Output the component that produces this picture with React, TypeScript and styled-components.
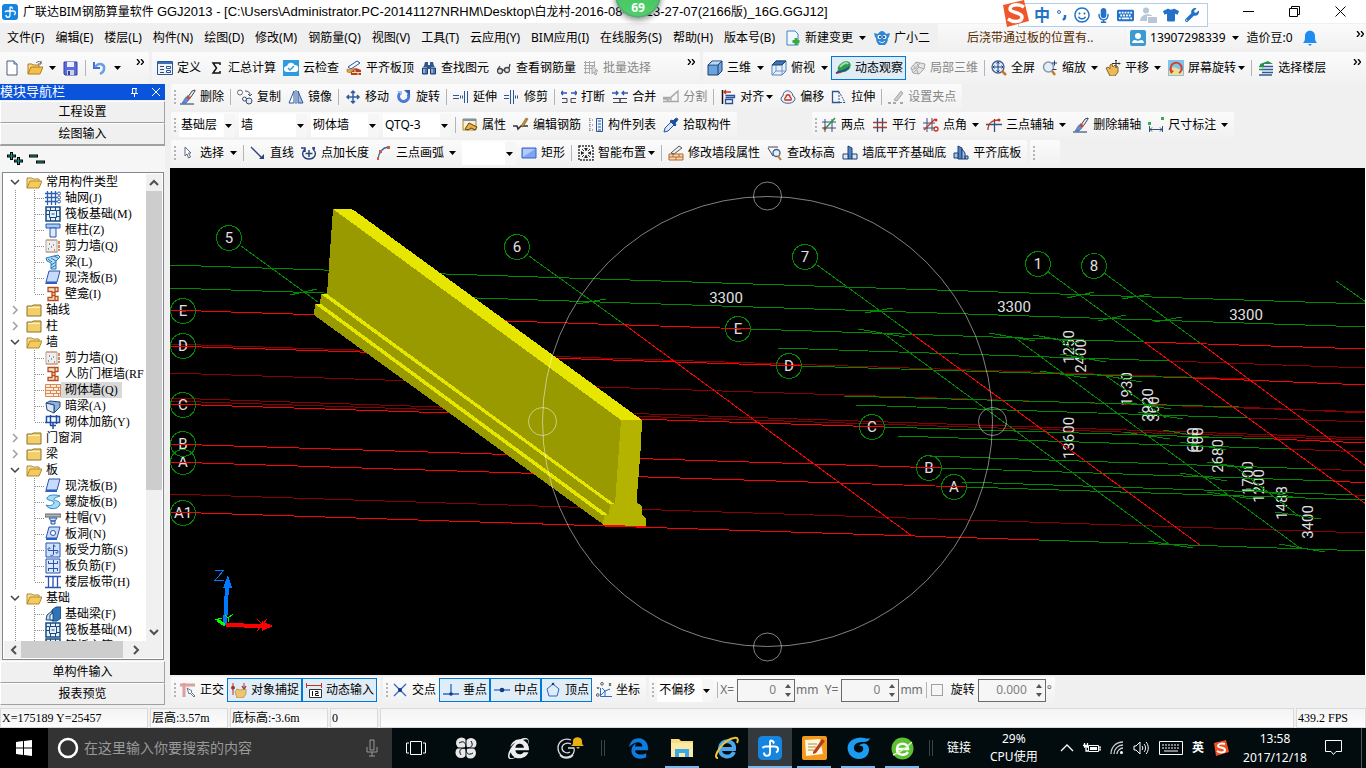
import React from 'react';
import styled, { createGlobalStyle, css } from 'styled-components';
import { FaInternetExplorer, FaKeyboard, FaMicrophone, FaRegSmile, FaTshirt, FaWrench } from 'react-icons/fa';
import { FaEdgeLegacy } from 'react-icons/fa6';

const ui = '"Noto Sans", "Noto Sans CJK SC", sans-serif';
const song = '"Liberation Serif", "Noto Sans CJK SC", serif';

const GlobalStyle = createGlobalStyle`
  * { box-sizing: border-box; }
  body { margin: 0; background: #f0f0f0; color: #000; font: 12px/16px ${ui}; overflow: hidden; }
  button, input, select { font: inherit; color: inherit; margin: 0; padding: 0; border: 0; background: none; border-radius: 0; }
  svg { display: block; }
`;

/* ---------- icons ---------- */

const B = '#2b5797';
const R = '#c8321e';
const G = '#a8a8a8';

const icons: Record<string, React.ReactNode> = {
  file: <><path d="M3 1h7l3 3v11H3z" fill="#fff" stroke="#4a5f80" /><path d="M10 1v3h3" fill="#cfe0f5" stroke="#4a5f80" /></>,
  open: <><path d="M1 14V4h4l1 1h6v3" fill="#f7d98a" stroke="#b07d1c" /><path d="M1 14L4 7h12l-3 7z" fill="#f5c04a" stroke="#b07d1c" /><path d="M9 3c2-2 4-2 5 0m0-2v3h-3" fill="none" stroke="#555" /></>,
  save: <><path d="M1 2h13v13H2l-1-1z" fill="#5a6be0" stroke="#32409c" /><path d="M4 2h7v5H4z" fill="#eef" /><path d="M4 10h7v5H4z" fill="#cdd3e8" /><path d="M5 11h2v4H5z" fill="#32409c" /></>,
  undo: <><path d="M2 2v6h6" fill="none" stroke="#3c6fd0" strokeWidth="2" /><path d="M3 7c4-5 10-3 9 2 0 3-2 4-4 5" fill="none" stroke="#6c9be8" strokeWidth="2.500" /></>,
  define: <><path d="M.5 1.500h15v13H.5z" fill="#eaf2fc" stroke={B} /><path d="M1 2h14v2H1z" fill="#3a70b8" /><path d="M3 6.500h4M3 9.500h4M3 12.500h4" stroke="#445" /><path d="M9.500 6.500h4v2h-4zm0 4h4v2h-4z" fill="#fff" stroke={B} /></>,
  sigma: <path d="M12 5V3H5l3.500 5L5 13h7v-2" fill="none" stroke="#111" strokeWidth="1.500" />,
  cloud: <><path d="M0 0h16v16H0z" fill="#2e9be0" /><path d="M4 12a3 3 0 0 1 0-6 4 4 0 0 1 7.500-1A3.500 3.500 0 0 1 12 12z" fill="#fff" /><path d="M5 8l2 2 4-4" fill="none" stroke="#2e9be0" strokeWidth="1.500" /></>,
  slabTop: <><path d="M2 7l9-6 3 2-9 6z" fill="#f4f7fc" stroke={B} /><path d="M1 9l4 1 3-2 1 2-4 3-4-1z" fill="#e9a23c" stroke="#8a5a18" strokeWidth=".500" /><path d="M5 15v-3l5-4 5 2v5z" fill="#b5402a" /><path d="M6 12.500h9M9 10v2m3 1v2" stroke="#ffe0a0" /></>,
  find: <><path d="M3 6l1-4h3v5H2zM9 2h3l1 4 1 1H9z" fill="#2f568f" /><path d="M1.500 8h5v6h-5zm8 0h5v6h-5z" fill="#4d7ab8" stroke="#1d3b68" /><path d="M6 5h4v4H6z" fill="#2f568f" /><path d="M3 9v4M11 9v4" stroke="#cfe0f5" /></>,
  glasses: <><circle cx="4" cy="11" r="2.500" fill="#dde6f2" stroke="#444" strokeWidth="1.300" /><circle cx="11" cy="10" r="2.500" fill="#dde6f2" stroke="#444" strokeWidth="1.300" /><path d="M6.500 10h2M13 8l1-4M2 9l2-3" stroke="#444" strokeWidth="1.300" /></>,
  batch: <><path d="M1 2.500h11M1 5.500h11M1 8.500h8M1 12.500h6M2.500 1v13M6.500 1v13M11.500 1v6" stroke={G} fill="none" /><path d="M9 6l6 5h-3l2 3-2 1-1-3-2 2z" fill="#ddd" stroke={G} /></>,
  cube: <><path d="M1 5l4-4h10v10l-4 4H1z" fill="#6ba3dc" stroke="#1f3f6e" /><path d="M1 5h10v10M11 5l4-4" fill="none" stroke="#1f3f6e" /><path d="M2 4.500l3.500-3h8.500l-3.500 3z" fill="#b9d8f5" /></>,
  cubeTop: <><path d="M1 5l4-4h10v10l-4 4H1z" fill="#e7f0fb" stroke="#5580b8" /><path d="M1 5l4-4h10l-4 4z" fill="#3b76bd" stroke="#1f3f6e" /><path d="M11 5v10M5 5v6h9M5 11l-4 4" fill="none" stroke="#6b94c8" /></>,
  orbit: <><path d="M1 14l3-6 3-2 3 4-4 3z" fill="#c33" /><path d="M3 7c3-6 10-7 12-4s-1 8-6 9-7-1-6-5z" fill="#2f9b4a" /><path d="M5 7c3-4 7-5 8-3" stroke="#9be0a8" strokeWidth="2" fill="none" /><path d="M1 13c5-3 10-1 13-6" stroke="#1a4f9c" fill="none" strokeWidth="1.500" /></>,
  local3d: <path d="M1 8l5-6 9 2-1 5-5 5-6-1zM6 2l3 5 5 2M9 7l-6 6M3 5l4 5 1 4M10 3l-2 3-6 4" fill="#e3e3e3" stroke={G} />,
  fit: <><circle cx="7" cy="7" r="6" fill="#e2eefb" stroke="#445f8a" strokeWidth="1.300" /><path d="M7 2v10M2 7h10M5.500 3.500L7 2l1.500 1.500M5.500 10.500L7 12l1.500-1.500M3.500 5.500L2 7l1.500 1.500M10.500 5.500L12 7l-1.500 1.500" stroke="#1c3f86" fill="none" /><path d="M11 11l4 4" stroke="#c07c2c" strokeWidth="2.500" /></>,
  zoom: <><circle cx="6.500" cy="7" r="5" fill="#e2eefb" stroke="#8b98a8" strokeWidth="1.500" /><path d="M10 11l3 4" stroke="#c07c2c" strokeWidth="2.500" /><path d="M10 3h5m-2.500-2.500v5M10.500 9.500h4" stroke="#1c3f86" /></>,
  pan: <><path d="M1 8l2-1 2 2V5l2-1 1 3 2-2 3 2v5l-3 4H5z" fill="#e9b95c" stroke="#8a6420" /><path d="M11 0v8M7 3.500h8M10 1l1-1 1 1M14 2.500l1 1-1 1" stroke="#333" fill="none" /></>,
  rotScreen: <><path d="M0 0h16v16H0z" fill="#7cc6ee" /><path d="M1 10l5-3 9 4v4H1z" fill="#f2df8e" /><path d="M3 10a5.500 5.500 0 1 1 8 3" fill="none" stroke="#e03a2a" strokeWidth="2" /><path d="M1 9l2 5 3-3z" fill="#e03a2a" /></>,
  floors: <><path d="M2 4l8-3 5 3H6v2H2z" fill="#2e8f50" /><path d="M4 6.500h11M4 9.500h11M4 12.500h11M1 15h13" stroke="#2d5c94" strokeWidth="1.300" /><path d="M1 6.500h5M1 9.500h4" stroke="#2e8f50" strokeWidth="1.500" /></>,
  brush: <><path d="M15 1l-3 1-4 6 1 1 2-1 4-6z" fill="#e9eef5" stroke="#445" /><path d="M8 6l3 3-2 2-3-3z" fill="#c84a35" /><path d="M6 8l3 3-3 3H2c1-1 2-4 4-6z" fill="#5c8fd8" stroke="#28509c" strokeWidth=".500" /><path d="M0 15h14" stroke="#1d2f50" /></>,
  copy: <><circle cx="3" cy="3.500" r="2.500" fill="#fff" stroke="#667" /><circle cx="12" cy="12" r="3" fill="#dce8f8" stroke="#3b4c6a" /><circle cx="7.500" cy="10" r="2" fill="#fff" stroke="#3b4c6a" /><path d="M8 2c3 0 5 1 5 4m-2-1l2 2 2-2" fill="none" stroke="#556" /></>,
  mirror: <><path d="M6 2v12H1z" fill="#fff" stroke={B} /><path d="M10 2v12h5z" fill="#9cc0ec" stroke={B} /><path d="M8 1v14" stroke={B} /></>,
  move: <path d="M8 2v12M2 8h12M6 4l2-2 2 2M6 12l2 2 2-2M4 6L2 8l2 2M12 6l2 2-2 2" fill="none" stroke="#345c9c" strokeWidth="1.500" />,
  rotate: <><path d="M4 4a5 5 0 1 0 8 1" fill="none" stroke="#4a7ad8" strokeWidth="3" /><path d="M8 1h6v6z" fill="#3560c0" /><path d="M1 2h5v4z" fill="#9dbcf0" /></>,
  extend: <><path d="M0 6.500h6M0 9.500h6" stroke={B} /><path d="M7 8h4" stroke={B} strokeDasharray="1 1" strokeWidth="3" /><path d="M11.500 2v12M14.500 2v12" stroke={B} /></>,
  trim: <><path d="M0 6.500h5M0 9.500h5" stroke={B} /><path d="M6.500 1v14M9.500 1v14" stroke={B} /><path d="M11 8h4" stroke={B} strokeDasharray="1 1" strokeWidth="3" /></>,
  breakIt: <><path d="M0 4h6M10 4h6M2 2L0 4l2 2M14 2l2 2-2 2" fill="none" stroke="#3059b0" strokeWidth="1.300" /><path d="M1 9.500h5v4H1M15 9.500h-5v4h5" fill="none" stroke="#445" /></>,
  join: <><path d="M0 4h6M10 4h6M4 2l2 2-2 2M12 2l-2 2 2 2" fill="none" stroke="#3059b0" strokeWidth="1.300" /><path d="M1 9.500h7v4H1M15 9.500H8v4h7" fill="none" stroke="#445" /></>,
  split: <path d="M0 8.500h7M0 12.500h16M8 12V8l7-6v10M4 12l10-9M0 10h5" stroke={G} fill="none" strokeWidth="1.300" />,
  align: <><path d="M2.500 1v14" stroke="#111" strokeWidth="1.500" /><path d="M5.500 10.500h7v4h-7zM5.500 6.500h9v2h-9" fill="none" stroke="#28509c" strokeWidth="1.300" /><path d="M4 3h7M6 1L4 3l2 2" fill="none" stroke={R} strokeWidth="1.300" /></>,
  offset: <><path d="M2 12a3 3 0 0 1 1-5c0-7 9-7 10 0a3 3 0 0 1 1 5c-2 3-10 3-12 0z" fill="#eef3fb" stroke="#445f8a" /><path d="M5 11c-1-2 0-2 1-3 0-3 4-3 4 0 1 1 2 1 1 3z" fill="none" stroke={R} strokeWidth="1.300" /></>,
  stretch: <><path d="M8 2.500H1.500v11H9" fill="none" stroke={B} strokeWidth="1.300" /><path d="M8 2.500l6 11M8 3v11M9 13.500h6" stroke={B} strokeDasharray="2 1" fill="none" /></>,
  grip: <><path d="M6 11l7-9 2 2-6 8z" fill="#ccc" stroke={G} /><path d="M0 14h3m2 0h3m4 0h3" stroke={G} strokeWidth="2" /></>,
  props: <><path d="M1 2h13v11H1z" fill="#fdf0c8" stroke="#b08030" /><path d="M1 2h13v2H1z" fill="#6f93c8" /><path d="M3 12l4-6 8 4-2 3-4-2-3 2z" fill="#e8b04a" stroke="#5c4010" /></>,
  editBar: <><path d="M0 9h4l1 3 3-3h7" fill="none" stroke="#333" strokeWidth="1.500" /><path d="M8 9l5-8 2 1-5 8z" fill="#c99035" stroke="#5a3a10" strokeWidth=".500" /></>,
  list: <><path d="M8.500 1.500h6v13h-6z" fill="#e9f1fc" stroke={B} /><path d="M10 4h3M10 7h3M10 10h3M10 13h3" stroke={B} /><path d="M1 3h2M4 3h2M1 8h2M4 8h2M1 13h2M4 13h2M2 1v14" stroke="#667" strokeDasharray="1 1" /></>,
  picker: <><path d="M1 15l1-4 6-6 3 3-6 6z" fill="#d8e8fa" stroke="#28509c" /><path d="M7 4l2-1 1 1 2-2c2-2 4 0 2 2l-2 2 1 2-1 1z" fill="#1f4f9e" stroke="#1f4f9e" /></>,
  twoPt: <><path d="M1 5h14M1 11h14M4 2v13M11 2v13" stroke="#34507c" /><path d="M3 13L14 1" stroke="#2a9a40" strokeWidth="1.500" /><circle cx="4" cy="11" r="1.500" fill={R} /></>,
  parallel: <><path d="M1 5.500h14M1 10.500h14" stroke={R} strokeWidth="1.300" /><path d="M5.500 1v14M10.500 1v14" stroke="#34507c" strokeWidth="1.300" /></>,
  ptAngle: <><path d="M0 6h12M0 11h12M4 1v14M9 1v13" stroke="#34507c" /><path d="M1 13L12 2" stroke={R} strokeWidth="1.300" /><circle cx="13" cy="3" r="1.500" fill={R} /><circle cx="13" cy="12" r="2" fill="none" stroke={R} strokeWidth="1.300" /></>,
  arcAxis: <><path d="M0 7.500h16M8.500 2v13" stroke="#34507c" strokeWidth="1.300" /><path d="M2 13C2 6 6 3 13 3" fill="none" stroke={R} strokeWidth="1.300" /><circle cx="13" cy="3" r="1.500" fill={R} /></>,
  dim: <><path d="M1.500 9v6M14.500 9v6M2 12.500h12M4 10.500l-2 2 2 2M12 10.500l2 2-2 2" fill="none" stroke="#34507c" /><path d="M0 5h3v3H0zM13 0h3v3h-3z" fill="#2fae4a" /></>,
  cursor: <path d="M5 2l6 6H8.500l2 4-2 1-1.500-4-2 2z" fill="#fff" stroke="#5b6b80" />,
  line: <><path d="M1 2l11 11" stroke="#27447c" strokeWidth="1.300" /><path d="M14 14H9l5-5z" fill="#27447c" /></>,
  ptLen: <><path d="M8 5v7M4.500 8.500h7" stroke="#27447c" strokeWidth="1.500" /><path d="M4 4c-5 5-1 10 4 10s9-5 4-10M0 3h4v4M11 3h3M13 2v4" fill="none" stroke="#27447c" strokeWidth="1.500" /></>,
  arc: <><path d="M2 14C3 7 6 3 12 2" fill="none" stroke="#3468b8" strokeWidth="1.300" /><path d="M1 12h2v3H1zM3 5h3v3H3zM11 1h3v3h-3z" fill="#d05a3c" /></>,
  rect: <><path d="M1 3h14v10H1z" fill="#7ca4f0" stroke="#3a62c8" /><path d="M2 4h12L2 12z" fill="#b3cbfa" /></>,
  smart: <><path d="M1 1h14v14H1z" fill="none" stroke="#333" strokeDasharray="2 1" strokeWidth="1.500" /><path d="M8 3v3M8 10v3M3 8h3M10 8h3M4 4l2 2M12 4l-2 2M4 12l2-2M12 12l-2-2" stroke="#333" /><path d="M6 3l2 3 2-3zM3 6l3 2-3 2zM13 6l-3 2 3 2zM6 13l2-3 2 3z" fill="#222" /></>,
  wallEdit: <><path d="M1 9h14v6H1zM1 12h14M5 9v3m6-3v3M8 12v3" fill="#fbd9b8" stroke="#b5682c" /><path d="M3 8l8-7 3 2-8 6z" fill="#eee" stroke="#555" /></>,
  level: <><path d="M1 2h10M1 3l5 8 1-3" fill="#eef4fb" stroke="#445" /><circle cx="9.500" cy="8" r="3.500" fill="#e2eefb" stroke="#445f8a" strokeWidth="1.300" /><path d="M11 11l3 4" stroke="#c07c2c" strokeWidth="2" /></>,
  wallBase: <><path d="M6 1l4 2v11H6z" fill="#4f86c8" stroke="#1f3f6e" /><path d="M1 9h5v5H1zM10 9h5v5h-5z" fill="#dce8f8" stroke="#1f3f6e" /></>,
  slabBase: <><path d="M5 1l4 2v11H5z" fill="#4f86c8" stroke="#1f3f6e" /><path d="M1 8h4v5H1zM9 4l3 4v6H9zM12 11h3v3h-3z" fill="#9ec2ec" stroke="#1f3f6e" /></>,
  ortho: <><path d="M0 3h15M4 1v14" stroke="#dca0a0" strokeWidth="3" /><path d="M7 6l5 3-1 1 4 4-1 1-4-4-1 1z" fill="#fff" stroke="#6b7b90" /></>,
  snap: <><path d="M2 1v12M13 1v6" stroke="#c03030" /><path d="M0 6h4M1 4l1 3 1-3M11 4l2 3 2-3" stroke="#a03030" strokeWidth="1.300" fill="none" /><path d="M4 10l2-3 3 1 6-1v5l-3 4H6z" fill="#edc56a" stroke="#8a6420" strokeWidth=".500" /></>,
  dyn: <><path d="M.5 1v5M15.500 1v5M0 3.500h16" stroke={R} /><path d="M3.500 7.500h12v8h-12z" fill="#fff" stroke="#333" /><path d="M6.500 9v5M9 9.500h3v2H9.500v2H13" stroke="#111" fill="none" /></>,
  cross: <><path d="M2 2l12 12M14 2L2 14" stroke="#2a69c8" strokeWidth="1.300" /><circle cx="8" cy="8" r="2" fill="#153a80" /></>,
  perp: <><path d="M8 2v9M0 12h16" stroke="#2a69c8" strokeWidth="1.300" /><circle cx="8" cy="12" r="1.800" fill="#153a80" /></>,
  mid: <><path d="M0 8h16" stroke="#2a69c8" strokeWidth="1.300" /><circle cx="8" cy="8" r="2.300" fill="#153a80" /></>,
  vertex: <><path d="M8 2l6 5-2 7H4L2 7z" fill="none" stroke="#2a69c8" /><circle cx="8" cy="2" r="1.300" fill="#153a80" /></>,
  coord: <><path d="M4.500 6v8.500H16M4 14l5-5 5-2M6 6l3 3v5" fill="none" stroke="#2a69c8" /><circle cx="6" cy="1.800" r="1.300" fill="none" stroke="#555" /><circle cx="1.800" cy="13" r="1.300" fill="none" stroke="#555" /><path d="M13 1l2 3m0-3l-2 3M1 5l1 2 1-2" stroke="#555" fill="none" /></>,
  change: <><path d="M2 1h8l3 3v11H2z" fill="#f2f8ff" stroke="#3a86c8" /><path d="M11 8v7M7.500 11.500h7" stroke="#3aa83a" strokeWidth="3" /></>,
  robot: <><path d="M0 3l4 1c2-4 6-4 8 0l4-1-1 4-1 1c0 4-2 6-3 7H5c-1-1-3-3-3-7L1 7z" fill="#2f87d8" /><circle cx="5.500" cy="7" r="2" fill="#fff" /><circle cx="10.500" cy="7" r="2" fill="#fff" /><circle cx="6" cy="7" r="1" fill="#124" /><circle cx="10" cy="7" r="1" fill="#124" /><path d="M5 11c2 2 4 2 6 0" stroke="#fff" fill="none" /></>,
  account: <><rect width="16" height="16" rx="2" fill="#3c9bd0" /><circle cx="8" cy="6" r="3" fill="#fff" /><path d="M2 13c1-4 3-3 6-2 3-1 5-2 6 2z" fill="#fff" /></>,
  bell: <><path d="M1 13c2-2 2-4 2-7 0-7 10-7 10 0 0 3 0 5 2 7z" fill="#1e8cf0" /><path d="M6 14h4l-2 2z" fill="#1e8cf0" /></>,
  logo: <><rect width="16" height="16" rx="3" fill="#1585e0" /><path d="M8 3v8c0 3-4 3-4 0M8 3c2 0 3 1 2 2M3 8c1-1 1-1 2-1h6c3 0 3 3 1 4" fill="none" stroke="#fff" strokeWidth="1.300" /></>,
  /* tree */
  folderOpen: <><path d="M1 14V4h5l1 1h6v3" fill="#f6dc94" stroke="#b48a2e" /><path d="M1 14L4 7h12l-3 7z" fill="#f3ca5c" stroke="#b48a2e" /></>,
  folder: <><path d="M1 4h5l1-1h8v11H1z" fill="#f3cf6c" stroke="#8f7228" /><path d="M2 5.500h12" stroke="#fff2c4" /></>,
  grid: <><path d="M0 3.500h12M0 7.500h12M0 11.500h12M2.500 1v14M6.500 1v14M10.500 1v14" stroke="#2c5fb0" strokeWidth="1.300" /><circle cx="14" cy="3.500" r="1.500" fill="none" stroke="#2c5fb0" /><circle cx="14" cy="7.500" r="1.500" fill="none" stroke="#2c5fb0" /><circle cx="14" cy="11.500" r="1.500" fill="none" stroke="#2c5fb0" /></>,
  raft: <><path d="M1 1h14v14H1z" fill="#e8f1fb" stroke="#174a80" strokeWidth="1.500" /><path d="M4.500 4.500h7v7h-7zM1 4.500h3M1 8.500h3M12 4.500h3M12 10.500h3M5.500 1v3M10.500 1v3M5.500 12v3M10.500 12v3M6.500 8h3" fill="none" stroke="#174a80" /></>,
  column: <><path d="M1 2h14v4H1z" fill="#a8cbf2" stroke="#2458a8" /><path d="M5 6h6v9H5z" fill="#dceafb" stroke="#2458a8" /></>,
  shear: <><path d="M1 2h11v12H1z" fill="#eee" stroke={G} /><path d="M1 2h11M1 14h12" stroke="#d89068" /><path d="M3 11h1m2-2h1m2 3h1M4 6h1m3 1h1" stroke="#444" /><path d="M14 3v10" stroke="#d06020" strokeDasharray="3 1" strokeWidth="1.500" /></>,
  beam: <><path d="M1 4l12-3 2 2-4 4v8H6V9L2 7z" fill="#b5dcf6" stroke="#2878b8" /><path d="M3 5l4 3m-1-4l5 3m-2-5l4 2M6 11l5-3M6 14l5-3" stroke="#2878b8" /></>,
  slab: <><path d="M4 1h11l-3 11H1z" fill="#c7dcfb" stroke="#2a52b0" /><path d="M1 12h11v2H0z" fill="#2a5fc4" /></>,
  niche: <path d="M3 1.500h10v4h-3v5h3v4H3v-3h4v-6H3zM7 6.500h3M7 9.500h3M10 2v3M10 11v3" fill="#fbe3cf" stroke="#b5501c" strokeWidth="1.300" />,
  brick: <path d="M.5 2.500h15v12H.500zM0 5.500h16M0 8.500h16M0 11.500h16M5.500 2v3m6-3v3M8.500 5v3m5-3v3M5.500 8v3m6-3v3M8.500 11v3m5-3v3" fill="#fdebdc" stroke="#d98a58" />,
  hidden: <><path d="M1 5l4-2 10 1v5l-6 6V7z" fill="#8fb0d8" stroke="#234a80" /><path d="M1 5l8 2v8l-7-3z" fill="#dbe6f4" stroke="#234a80" /></>,
  rebar: <path d="M1.500 2.500h13v6h-13zM0 8.500h15M5.500 1v11M11.500 1v9M5 11.500h6M8 8v7" fill="none" stroke="#1f4fa0" strokeWidth="1.500" />,
  spiral: <path d="M15 2C9 0 3 1 2 4s8 2 7 5-6 3-8 2c2 5 13 5 14-1 0-4-7-3-6-5s4-2 6-3z" fill="#a7dcf5" stroke="#2688c4" />,
  cap: <><path d="M0 4h16v3H0z" fill="#aab3bd" stroke="#666" /><path d="M4 8h8l-2 3H6zM6 11h4v3H6z" fill="#d5e5fa" stroke="#2458a8" /></>,
  hole: <><path d="M4 1h11l-3 11H1z" fill="#c7dcfb" stroke="#2a52b0" /><path d="M1 12h11v2H1z" fill="#2a5fc4" /><circle cx="8" cy="7" r="2.500" fill="#fff" stroke="#2a52b0" /></>,
  force: <path d="M1 1h14v14H1zM3 8.500h10M8.500 3v9c0 2-3 2-3 1M3 8c0-3 2-3 2-1M13 9c0 3-2 3-2 1M8 3c2 0 2 1 2 2" fill="#cfe2fb" stroke="#2a52b0" />,
  neg: <path d="M1 1h14v14H1zM3 5.500h10M3 10.500h10M3.500 3v3M12.500 3v3M3.500 10v3M12.500 10v3M8.500 2v12" fill="#d9e8fc" stroke="#2a52b0" />,
  strip: <path d="M0 2.500h16M0 13.500h16M3.500 3v10M12.500 3v10M8 3v10" stroke="#2a52b0" fill="none" strokeWidth="1.300" />,
  footBeam: <><path d="M7 4l4-3h5v11l-4 3H7z" fill="#2f74b8" stroke="#174a80" /><path d="M1 14l1-5 5-4v9z" fill="#bfdcf4" stroke="#174a80" /><path d="M5 14V9l3-2v7z" fill="#fff" stroke="#174a80" /></>,
};

const Svg = styled.svg<{ $s?: number }>`
  width: ${(p) => p.$s ?? 16}px;
  height: ${(p) => p.$s ?? 16}px;
  flex: none;
`;
const Icon = ({ name, size }: { name: string; size?: number }) => (
  <Svg $s={size} viewBox="0 0 16 16" aria-hidden="true">{icons[name]}</Svg>
);

const ArrowSvg = styled.svg<{ $gap: number }>`
  width: 7px;
  height: 4px;
  flex: none;
  margin-left: ${(p) => p.$gap}px;
`;
const Arrow = ({ gap = 6 }: { gap?: number }) => (
  <ArrowSvg $gap={gap} viewBox="0 0 7 4" aria-hidden="true"><path d="M0 0h7L3.500 4z" /></ArrowSvg>
);

/* ---------- shell ---------- */

const Frame = styled.div`
  display: flex;
  flex-direction: column;
  height: 100vh;
  position: relative;
`;
const TitleBar = styled.header`
  display: flex;
  align-items: center;
  gap: 5px;
  height: 23px;
  padding: 0 20px 0 2px;
  background: #fff;
  white-space: nowrap;
`;
const TitleLatin = styled.span`
  font-family: "Liberation Sans", Roboto, sans-serif;
  font-size: 13px;
`;
const WindowButtons = styled.div`
  display: flex;
  gap: 35px;
  margin-left: auto;
`;
const WinButton = styled.button`
  width: 11px;
  height: 20px;
  display: grid;
  place-items: center;
`;
const MenuBar = styled.nav`
  display: flex;
  align-items: center;
  gap: 1px;
  height: 29px;
  padding-left: 2px;
  white-space: nowrap;
`;
const MenuItem = styled.button`
  padding: 0 5px;
  height: 24px;
`;
const Ticker = styled.a`
  margin-left: 4px;
  width: 187px;
  height: 28px;
  padding-left: 29px;
  line-height: 28px;
  color: #552b00;
  text-decoration: none;
  background: linear-gradient(#f9f9f9, #f0f0f0);
`;
const Account = styled.div`
  display: flex;
  align-items: center;
  flex: 1;
  height: 28px;
  background: linear-gradient(#fbfbfb, #f0f0f0);
`;
const MoreButton = styled.button`
  align-self: flex-start;
  margin-left: auto;
  padding: 7px 2px 0 0;
`;
const More = () => (
  <MoreButton type="button" aria-label="更多">
    <svg width="8" height="6" viewBox="0 0 8 6"><path d="M1 0l2.500 3L1 6M5 0l2.500 3L5 6" fill="none" stroke="#000" strokeWidth="1.300" /></svg>
  </MoreButton>
);

const ToolRow = styled.div<{ $h?: number }>`
  display: flex;
  align-items: center;
  gap: 3px;
  height: ${(p) => p.$h ?? 26}px;
  white-space: nowrap;
`;
const Band = styled.div<{ $w?: number; $grow?: boolean; $push?: number; $pad?: number }>`
  display: flex;
  align-items: center;
  align-self: stretch;
  flex: ${(p) => (p.$grow ? '1' : 'none')};
  width: ${(p) => (p.$w ? `${p.$w}px` : 'auto')};
  margin-left: ${(p) => p.$push ?? 0}px;
  padding: 0 3px 0 ${(p) => p.$pad ?? 0}px;
  border-radius: 2px;
  background: linear-gradient(#fbfbfb, #f1f1f1);
`;
const Grip = styled.span`
  width: 2px;
  height: 15px;
  margin-left: 3px;
  flex: none;
  background: repeating-linear-gradient(#b4b4b4 0 2px, transparent 2px 4px);
`;
const Sep = styled.span`
  width: 1px;
  height: 16px;
  margin: 0 2px 0 3px;
  flex: none;
  background: #b4b4b4;
`;
const ToolButton = styled.button<{ $active?: boolean }>`
  display: flex;
  align-items: center;
  height: 24px;
  padding: 0 2px 0 3px;
  border: 1px solid transparent;
  ${(p) => p.$active && css`
    border-color: #0078d7;
    background: #e0ecf6;
  `}
  &:disabled { color: #868686; }
`;
const ToolLabel = styled.span`
  margin-left: 4px;
`;

type ToolDef = { i?: string; t?: string; arrow?: number; on?: boolean; off?: boolean; label?: string };
const Tool = ({ i, t, arrow, on, off, label }: ToolDef) => (
  <ToolButton type="button" $active={on} disabled={off} aria-label={t ?? label} aria-pressed={on}>
    {i && <Icon name={i} />}
    {t && <ToolLabel>{t}</ToolLabel>}
    {arrow !== undefined && <Arrow gap={arrow} />}
  </ToolButton>
);
const Tools = ({ items }: { items: (ToolDef | '|')[] }) => (
  <>{items.map((x, n) => (x === '|' ? <Sep key={n} /> : <Tool key={n} {...x} />))}</>
);

const ComboBox = styled.span<{ $w: number }>`
  position: relative;
  width: ${(p) => p.$w}px;
  height: 23px;
  margin: 0 1px 0 3px;
  background: linear-gradient(90deg, #fff calc(100% - 11px), #f6f6f6 0);
  svg { position: absolute; right: 3px; top: 10px; pointer-events: none; }
`;
const ComboSelect = styled.select`
  appearance: none;
  width: 100%;
  height: 100%;
  padding: 0 12px 0 2px;
`;
const Combo = ({ value, w, label }: { value: string; w: number; label: string }) => (
  <ComboBox $w={w}>
    <ComboSelect aria-label={label}><option>{value}</option></ComboSelect>
    <Arrow gap={0} />
  </ComboBox>
);

const Main = styled.div`
  display: flex;
  flex: 1;
  min-height: 0;
`;
const Work = styled.main`
  flex: 1;
  min-width: 0;
  display: flex;
  flex-direction: column;
`;
const Bars = styled.div`
  display: flex;
  flex-direction: column;
  gap: 2px;
  padding: 0 0 2px 1px;
`;
const BottomBar = styled.div`
  padding: 2px 0 5px 1px;
`;

/* ---------- sidebar ---------- */

const Side = styled.aside`
  width: 165px;
  margin-right: 5px;
  flex: none;
  display: flex;
  flex-direction: column;
  padding-bottom: 3px;
  font-family: ${song};
`;
const SideHead = styled.div`
  display: flex;
  align-items: center;
  gap: 13px;
  height: 16px;
  margin-bottom: 1px;
  padding-right: 5px;
  background: #0a54dc;
  color: #fff;
  font-size: 13px;
  button:first-of-type { margin-left: auto; }
`;
const SideButton = styled.button`
  height: 22px;
  flex: none;
  border: 1px solid #a0a0a0;
  border-color: #fff #a0a0a0 #a0a0a0 #fff;
`;
const SideTools = styled.div`
  display: flex;
  align-items: center;
  gap: 6px;
  height: 27px;
  flex: none;
  padding-left: 7px;
  background: #f6f6f6;
  border-top: 1px solid #a0a0a0;
`;
const TreeBox = styled.div`
  flex: 1;
  min-height: 0;
  margin: 0 1px 1px 2px;
  padding: 1px;
  border: 1px solid #828790;
  background: #fff;
  display: flex;
  flex-direction: column;
`;
const TreeTop = styled.div`
  display: flex;
  flex: 1;
  min-height: 0;
`;
const Tree = styled.ul`
  flex: 1;
  min-width: 0;
  margin: 0;
  padding: 0;
  overflow: hidden;
  list-style: none;
  white-space: nowrap;
`;
const dots = 'repeating-linear-gradient(#909090 0 1px, transparent 1px 2px)';
const dotsX = 'repeating-linear-gradient(90deg, #909090 0 1px, transparent 1px 2px)';
const Node = styled.li<{ $child: boolean; $last?: boolean }>`
  display: flex;
  align-items: center;
  height: 16px;
  padding-left: ${(p) => (p.$child ? 41 : 5)}px;
  background-repeat: no-repeat;
  ${(p) => p.$child && css`
    background-image: ${dots}, ${dots}, ${dotsX};
    background-size: 1px 100%, 1px ${p.$last ? '50%' : '100%'}, 10px 1px;
    background-position: 11px 0, 30px 0, 31px 8px;
  `}
`;
const Chevron = styled.svg`
  width: 13px;
  height: 10px;
  flex: none;
  margin-right: 4px;
`;
const NodeLabel = styled.span<{ $sel?: boolean }>`
  height: 16px;
  padding: 0 4px;
  ${(p) => p.$sel && css`background: #d9d9d9;`}
`;
const VScroll = styled.div`
  width: 16px;
  flex: none;
  display: flex;
  flex-direction: column;
  align-items: center;
  justify-content: space-between;
  padding: 4px 0;
  background: linear-gradient(#f0f0f0 17px, #cdcdcd 17px 316px, #f0f0f0 316px);
`;
const HScroll = styled.div`
  height: 17px;
  flex: none;
  display: flex;
  align-items: center;
  justify-content: space-between;
  padding: 0 21px 0 5px;
  background: linear-gradient(90deg, #f0f0f0 17px, #cdcdcd 17px 119px, #f0f0f0 119px);
`;
const ScrollBtn = styled.button`
  display: grid;
  place-items: center;
  width: 10px;
  height: 10px;
`;
const Chev = ({ d, label }: { d: string; label: string }) => (
  <ScrollBtn type="button" aria-label={label}>
    <Svg $s={10} viewBox="0 0 10 10"><path d={d} fill="none" stroke="#505050" strokeWidth="2" /></Svg>
  </ScrollBtn>
);

type TreeRow = [kind: string, text: string, flag?: 'sel' | 'last'];
const tree: TreeRow[] = [
  ['o', '常用构件类型'], ['grid', '轴网(J)'], ['raft', '筏板基础(M)'], ['column', '框柱(Z)'], ['shear', '剪力墙(Q)'],
  ['beam', '梁(L)'], ['slab', '现浇板(B)'], ['niche', '壁龛(I)', 'last'], ['c', '轴线'], ['c', '柱'],
  ['o', '墙'], ['shear', '剪力墙(Q)'], ['niche', '人防门框墙(RF'], ['brick', '砌体墙(Q)', 'sel'], ['hidden', '暗梁(A)'],
  ['rebar', '砌体加筋(Y)', 'last'], ['c', '门窗洞'], ['c', '梁'], ['o', '板'], ['slab', '现浇板(B)'],
  ['spiral', '螺旋板(B)'], ['cap', '柱帽(V)'], ['hole', '板洞(N)'], ['force', '板受力筋(S)'], ['neg', '板负筋(F)'],
  ['strip', '楼层板带(H)', 'last'], ['o', '基础'], ['footBeam', '基础梁(F)'], ['raft', '筏板基础(M)'], ['raft', '筏板主筋(R)'],
];

const Sidebar = () => (
  <Side>
    <SideHead>
      模块导航栏
      <button type="button" aria-label="固定"><Svg $s={9} viewBox="0 0 9 9"><path d="M2 .5h5M2.500 1v4M6 1v4M1 5.500h7M4.500 6v3" stroke="#fff" fill="none" /></Svg></button>
      <button type="button" aria-label="关闭"><Svg $s={8} viewBox="0 0 8 8"><path d="M0 0l8 8M8 0L0 8" stroke="#fff" /></Svg></button>
    </SideHead>
    <SideButton type="button">工程设置</SideButton>
    <SideButton type="button">绘图输入</SideButton>
    <SideTools>
      <button type="button" aria-label="全部展开"><Svg viewBox="0 0 16 16"><path d="M4.500 1v8M0 5h9M11.500 6v8M7 10h9" stroke="#000" strokeWidth="3" /><path d="M4.500 2v6M1 5h7M11.500 7v6M8 10h7" stroke="#12a090" /></Svg></button>
      <button type="button" aria-label="全部折叠"><Svg viewBox="0 0 16 16"><path d="M0 5h9M7 11h9" stroke="#000" strokeWidth="3" /><path d="M1 5h7M8 11h7" stroke="#12a090" /></Svg></button>
    </SideTools>
    <TreeBox>
      <TreeTop>
        <Tree>
          {tree.map(([k, text, flag], n) => {
            const child = k !== 'o' && k !== 'c';
            return (
              <Node key={n} $child={child} $last={flag === 'last'}>
                {!child && (
                  <Chevron viewBox="0 0 13 10">
                    <path d={k === 'o' ? 'M2 3l4 4 4-4' : 'M4 1l4 4-4 4'} fill="none" stroke={k === 'o' ? '#404040' : '#a0a0a0'} strokeWidth="1.500" />
                  </Chevron>
                )}
                <Icon name={k === 'o' ? 'folderOpen' : k === 'c' ? 'folder' : k} />
                <NodeLabel $sel={flag === 'sel'}>{text}</NodeLabel>
              </Node>
            );
          })}
        </Tree>
        <VScroll>
          <Chev label="向上滚动" d="M1 7l4-4 4 4" />
          <Chev label="向下滚动" d="M1 3l4 4 4-4" />
        </VScroll>
      </TreeTop>
      <HScroll>
        <Chev label="向左滚动" d="M7 1L3 5l4 4" />
        <Chev label="向右滚动" d="M3 1l4 4-4 4" />
      </HScroll>
    </TreeBox>
    <SideButton type="button">单构件输入</SideButton>
    <SideButton type="button">报表预览</SideButton>
  </Side>
);

/* ---------- 3D viewport ---------- */

const Viewport = styled.svg`
  flex: 1;
  min-height: 0;
  width: 100%;
  background: #000;
  border-right: 1px solid #fff;
`;

type Seg = [number, number, number, number];
const green: Seg[] = [
  [170, 265, 1366, 304], [170, 288, 1366, 327], [751, 329, 1144, 342], [778, 348, 1169, 361], [802, 366, 1195, 378],
  [843, 396, 1239, 407], [856, 405, 1248, 418], [884, 427, 1274, 439], [898, 436, 1289, 449], [942, 468, 1333, 481],
  [930, 456, 1316, 469], [967, 487, 1366, 500], [962, 482, 1354, 495], [1039, 540, 1366, 551],
  [241, 246, 318, 302], [529, 256, 625, 325], [817, 265, 912, 334], [883, 333, 1169, 544], [1048, 272, 1144, 342],
  [1104, 273, 1200, 343], [1014, 337, 1300, 548], [1057, 338, 1086, 360], [1106, 376, 1166, 418], [1233, 465, 1300, 517],
  [1336, 281, 1366, 302],
  [290, 295, 317, 289], [577, 304, 606, 299], [865, 313, 893, 308], [1067, 298, 1094, 292], [1122, 299, 1150, 294],
  [1098, 321, 1126, 315], [1154, 322, 1182, 317], [858, 329, 905, 337], [989, 333, 1035, 341], [1033, 335, 1079, 343],
  [1060, 354, 1106, 362], [1040, 371, 1087, 378], [1095, 374, 1142, 382], [1124, 402, 1171, 409], [1138, 412, 1183, 419],
  [1124, 432, 1170, 439], [1163, 430, 1209, 438], [1180, 442, 1226, 450], [1207, 462, 1253, 469], [1180, 473, 1227, 481],
  [1207, 492, 1253, 499], [1246, 488, 1293, 497], [1275, 512, 1321, 519], [1148, 541, 1193, 548], [1279, 544, 1325, 552],
];
const dark: Seg[] = [
  [170, 344, 1248, 379], [170, 373, 1366, 412], [1169, 361, 1366, 368], [1239, 407, 1366, 413], [1248, 418, 1366, 422],
  [170, 398, 1366, 438], [170, 401, 1366, 440], [1289, 449, 1366, 452], [1316, 469, 1366, 471], [1354, 495, 1366, 496],
  [170, 494, 1366, 533],
];
const red: Seg[] = [
  [170, 310, 751, 329], [1144, 342, 1366, 349], [170, 346, 802, 366], [1195, 378, 1366, 385], [170, 404, 884, 427],
  [1274, 439, 1366, 443], [170, 444, 942, 468], [1333, 481, 1366, 483], [170, 462, 967, 487], [170, 512, 1039, 540],
  [625, 325, 912, 536], [912, 334, 1200, 545], [1144, 342, 1366, 504], [1200, 343, 1366, 466],
];
const bubbles: [number, number, string][] = [
  [229, 238, '5'], [517, 247, '6'], [805, 257, '7'], [1038, 264, '1'], [1094, 266, '8'],
  [183, 311, 'E'], [183, 346, 'D'], [183, 405, 'C'], [183, 444, 'B'], [183, 462, 'A'], [183, 513, 'A1'],
  [738, 329, 'E'], [789, 366, 'D'], [872, 427, 'C'], [929, 468, 'B'], [954, 487, 'A'],
];
const across: [number, number][] = [[726, 298], [1014, 307], [1246, 315]];
const upright: [number, number, string][] = [
  [1069, 347, '1250'], [1081, 356, '2400'], [1127, 389, '1930'], [1148, 405, '3920'], [1154, 409, '300'], [1069, 438, '13600'],
  [1193, 440, '600'], [1198, 440, '600'], [1218, 456, '2680'], [1248, 478, '1700'], [1259, 486, '1200'], [1282, 503, '1488'],
  [1308, 522, '3400'],
];

const Lines = ({ list, color }: { list: Seg[]; color: string }) => (
  <path d={list.map(([a, b, c, d]) => `M${a} ${b}L${c} ${d}`).join('')} stroke={color} fill="none" shapeRendering="crispEdges" />
);

const Scene = () => (
  <Viewport viewBox="170 168 1195 507" preserveAspectRatio="xMidYMid slice" role="img" aria-label="三维视图">
    <Lines list={dark} color="#8a0000" />
    <g fontFamily="Roboto, sans-serif" fontSize="15" fill="#e0e0e0" textAnchor="middle">
      {across.map(([x, y]) => <text key={x} x={x} y={y + 5}>3300</text>)}
      {upright.map(([x, y, t]) => <text key={`${x}${t}`} transform={`translate(${x + 5} ${y}) rotate(-90)`}>{t}</text>)}
      {bubbles.map(([x, y, t], n) => <text key={n} x={x} y={y + 5}>{t}</text>)}
    </g>
    <Lines list={green} color="#008a00" />
    <Lines list={red} color="#ff0000" />
    <g fill="none" stroke="#008a00" shapeRendering="crispEdges">
      {bubbles.map(([x, y], n) => <circle key={n} cx={x} cy={y} r="12.500" />)}
    </g>
    <g shapeRendering="crispEdges">
      <path d="M333 209L622 420 618 520 604 525 314 315 315 304 320 304 321 294 327 294z" fill="#999900" />
      <path d="M333 209H351L355 211 642 420H621z" fill="#e6e600" />
      <path d="M321 294H327L615 504.500H610zM315 304H321L608 515H602z" fill="#e6e600" />
      <path d="M621 420H642L641 445 636.500 502 641.500 506 642 515 646 518V527L603 525 604 515H609L610 504H615z" fill="#b3b300" />
      <path d="M603 525.500L646 526.500" stroke="#f00" />
    </g>
    <g fill="none" stroke="#fff" strokeOpacity=".5">
      <circle cx="767.500" cy="421.500" r="225" />
      <circle cx="767.500" cy="196" r="14" />
      <circle cx="767.500" cy="647" r="14" />
      <circle cx="542.500" cy="421.500" r="14" />
      <circle cx="992.500" cy="421.500" r="14" />
    </g>
    <g fill="none" shapeRendering="crispEdges">
      <path d="M225 625L227 586" stroke="#0078ff" strokeWidth="4" />
      <path d="M223 588L228 575 232 588z" fill="#0078ff" />
      <path d="M226 625L262 626" stroke="#f00" strokeWidth="4" />
      <path d="M262 621L273 626 262 631z" fill="#f00" />
      <path d="M257 619L267 629M267 619L257 631" stroke="#f00" />
      <path d="M225 625L217 620" stroke="#0f0" strokeWidth="3" />
      <path d="M228 622V618L233 614M228 618L225 615M215 620L222 618" stroke="#0f0" />
      <path d="M215 570.500H223.500L215 580.500H224" stroke="#0078ff" />
    </g>
  </Viewport>
);

/* ---------- numeric fields and status ---------- */

const Field = styled.label`
  display: flex;
  align-items: center;
  color: #6d6d6d;
`;
const SpinBox = styled.span<{ $w: number }>`
  display: flex;
  width: ${(p) => p.$w}px;
  height: 23px;
  margin: 0 1px 0 3px;
  border: 1px solid #6a6a6a;
  background: #f6f6f6;
  input { flex: 1; min-width: 0; text-align: right; color: #808080; }
`;
const SpinKeys = styled.span`
  display: flex;
  flex-direction: column;
  justify-content: space-between;
  padding: 4px 3px 4px 9px;
  button { display: block; height: 4px; line-height: 4px; }
`;
const Spin = ({ id, value, w }: { id: string; value: string; w: number }) => (
  <SpinBox $w={w}>
    <input id={id} defaultValue={value} />
    <SpinKeys>
      <button type="button" aria-label="增加"><svg width="6" height="4"><path d="M0 4h6L3 0z" fill="#555" /></svg></button>
      <button type="button" aria-label="减少"><svg width="6" height="4"><path d="M0 0h6L3 4z" fill="#555" /></svg></button>
    </SpinKeys>
  </SpinBox>
);
const Check = styled.input`
  appearance: none;
  width: 12px;
  height: 12px;
  margin: 0 8px 0 2px;
  border: 1px solid #a0a0a0;
  background: #f6f6f6;
`;
const Black = styled.span`
  color: #000;
`;

const StatusBar = styled.footer`
  display: flex;
  gap: 2px;
  height: 20px;
  font-family: ${song};
  background: #f0f0f0;
`;
const Cell = styled.span<{ $w?: number }>`
  flex: ${(p) => (p.$w ? `0 0 ${p.$w}px` : '1')};
  padding: 0 1px;
  border: 1px solid #dadada;
  background: linear-gradient(#f4f4f4, #fdfdfd);
  line-height: 18px;
  white-space: nowrap;
`;

/* ---------- desktop taskbar ---------- */

const Taskbar = styled.div`
  display: flex;
  align-items: center;
  height: 40px;
  flex: none;
  color: #fff;
  background: #020b0e;
  white-space: nowrap;
`;
const Slot = styled.button<{ $w: number; $on?: boolean; $run?: boolean }>`
  display: grid;
  place-items: center;
  width: ${(p) => p.$w}px;
  height: 40px;
  flex: none;
  background-image: ${(p) => (p.$run || p.$on ? 'linear-gradient(#76b9ed, #76b9ed)' : 'none')};
  background-repeat: no-repeat;
  background-position: 50% 100%;
  background-size: ${(p) => (p.$on ? 44 : 34)}px 2px;
  background-color: ${(p) => (p.$on ? '#33393d' : 'transparent')};
`;
const StartSlot = styled(Slot)`
  background-color: #000;
`;
const Search = styled.label`
  display: flex;
  align-items: center;
  gap: 5px;
  width: 344px;
  height: 40px;
  padding: 0 14px 0 9px;
  background: #333;
  input { flex: 1; font-size: 14px; }
  input::placeholder { color: #999; opacity: 1; }
`;
const TaskSep = styled.span<{ $m: number }>`
  width: 4px;
  height: 16px;
  margin: 0 ${(p) => p.$m}px 0 5px;
  border: 1px solid #3c4346;
  border-width: 0 1px;
`;
const Stack = styled.span`
  display: flex;
  flex-direction: column;
  align-items: center;
  margin-left: 19px;
  line-height: 18px;
`;
const Tray = styled.div`
  display: flex;
  align-items: center;
  gap: 9px;
  margin-left: auto;
`;
const Clock = styled.time`
  width: 72px;
  margin: 0 5px 0 1px;
  text-align: center;
  line-height: 19px;
  white-space: pre-line;
`;
const Edge = styled.span`
  width: 1px;
  height: 40px;
  margin: 0 4px 0 10px;
  background: #555;
`;

const DesktopBar = () => (
  <Taskbar>
    <StartSlot type="button" $w={48} aria-label="开始"><svg width="16" height="16" viewBox="0 0 16 16"><path d="M0 2l7-1v6.500H0zM8 1l8-1v7.500H8zM0 8.500h7V15l-7-1zM8 8.500h8V16l-8-1z" fill="#fff" /></svg></StartSlot>
    <Search>
      <Svg $s={22} viewBox="0 0 22 22"><circle cx="11" cy="11" r="9" fill="none" stroke="#fff" strokeWidth="2.500" /></Svg>
      <input aria-label="搜索" placeholder="在这里输入你要搜索的内容" />
      <svg width="12" height="18" viewBox="0 0 12 18"><path d="M4 1h4v10H4zM1 8v5h10V8M6 13v4M3 17h6" fill="none" stroke="#999" /></svg>
    </Search>
    <Slot type="button" $w={48} aria-label="任务视图"><svg width="20" height="14" viewBox="0 0 20 14"><path d="M4.500.500h11v13h-11zM3 2H.5v10H3M17 2h2.500v10H17" fill="none" stroke="#fff" /></svg></Slot>
    <Slot type="button" $w={52} aria-label="应用">
      <svg width="22" height="22" viewBox="0 0 22 22"><g fill="#e8e8e8"><circle cx="6.500" cy="6" r="5.500" /><circle cx="16" cy="6.500" r="5.500" /><circle cx="15.500" cy="16" r="5.500" /><circle cx="6" cy="15.500" r="5.500" /></g><path d="M11 11C11 6 9 3 4 6M11 11c5 0 8-2 5-7M11 11c0 5 2 8 7 5M11 11c-5 0-8 2-5 7M11 0v11M22 11H11M11 22V11M0 11h11" stroke="#020b0e" fill="none" /></svg>
    </Slot>
    <Slot type="button" $w={52} aria-label="浏览器"><FaInternetExplorer size={21} color="#eee" /></Slot>
    <Slot type="button" $w={52} aria-label="提醒">
      <svg width="28" height="26" viewBox="0 0 28 26"><path d="M15 5C8 2 2 7 2 13s5 10 10 9 7-5 6-9h-6M15 9c-4-2-9 0-9 4s5 6 8 4M4 20c3 4 10 4 13 0" fill="none" stroke="#ddd" strokeWidth="1.300" /><path d="M15 11c2-1 2-3 2-5 0-5 9-5 9 0 0 2 0 4 2 5zM20 12h4l-2 2z" fill="#e8b010" /></svg>
    </Slot>
    <TaskSep $m={11} />
    <Slot type="button" $w={44} aria-label="Edge"><FaEdgeLegacy size={21} color="#0f7be0" /></Slot>
    <Slot type="button" $w={44} $run aria-label="文件资源管理器"><svg width="22" height="20" viewBox="0 0 22 20"><path d="M0 1h8l2 2h12v16H0z" fill="#f8dc80" /><path d="M0 5h22v14H0z" fill="#fbe9a4" /><path d="M4 19v-8h14v8h-4v-4H8v4z" fill="#38a8e8" /></svg></Slot>
    <Slot type="button" $w={44} aria-label="Internet Explorer">
      <svg width="25" height="24" viewBox="0 0 25 24"><path d="M6 13h14c1-10-13-10-14-1-1 10 11 11 14 4" fill="none" stroke="#4aa8ec" strokeWidth="4" /><path d="M4 22C-3 22 10 3 20 2c5-1 4 3 3 5" fill="none" stroke="#f2c430" strokeWidth="2" /></svg>
    </Slot>
    <Slot type="button" $w={44} $on aria-label="广联达"><Icon name="logo" size={24} /></Slot>
    <Slot type="button" $w={44} $run aria-label="便笺"><svg width="25" height="24" viewBox="0 0 25 24"><rect width="25" height="24" rx="2" fill="#f39a1c" /><path d="M3 4l15-1 3 15-17 2z" fill="#fdf6e0" /><path d="M6 8h9M6 11h8M6 14h6" stroke="#b98a40" /><path d="M11 16l9-13 3 2-9 12-3 1z" fill="#b5401c" /></svg></Slot>
    <Slot type="button" $w={44} $run aria-label="广联达G"><svg width="25" height="24" viewBox="0 0 25 24"><path d="M24 2C20 4 17 0 11 2 2 4-1 12 4 19c5 6 15 5 18-1 2-4 1-8-2-10-3-1-6 0-7 2 3-1 5 1 4 4-2 4-8 3-9-1-1-6 6-7 9-7 4 0 6-1 7-4z" fill="#1c9cf0" /></svg></Slot>
    <Slot type="button" $w={44} $run aria-label="浏览器"><svg width="23" height="23" viewBox="0 0 23 23"><circle cx="11.500" cy="11.500" r="11" fill="#5cc030" /><path d="M6 12h11c0-7-11-7-11 0s8 7 11 3" fill="none" stroke="#fff" strokeWidth="2.500" /><path d="M2 18C8 16 16 10 21 5" stroke="#d8f4c0" strokeWidth="1.500" fill="none" /></svg></Slot>
    <TaskSep $m={14} />
    链接
    <Stack><span>29%</span><span>CPU使用</span></Stack>
    <Tray>
      <svg width="14" height="8" viewBox="0 0 14 8"><path d="M1 7l6-6 6 6" fill="none" stroke="#fff" strokeWidth="1.300" /></svg>
      <svg width="18" height="12" viewBox="0 0 18 12"><path d="M5.500 3.500h10v6h-10zM16 5h2v3h-2z" fill="none" stroke="#fff" /><path d="M7 5h7v3H7z" fill="#fff" /><path d="M1.500 1v2M4.500 1v2M0 3.500h5M1 5h4M3 6v3h2" fill="none" stroke="#fff" strokeWidth="1.300" /></svg>
      <svg width="14" height="14" viewBox="0 0 14 14"><path d="M1 13C1 6 6 1 13 1M4 13c0-5 4-9 9-9M7 13c0-3 3-6 6-6" fill="none" stroke="#ccc" strokeWidth="1.300" /><circle cx="11.500" cy="11.500" r="1.500" fill="#fff" /></svg>
      <svg width="17" height="14" viewBox="0 0 17 14"><path d="M1 5h2l4-4v12L3 9H1zM9 5c1 1 1 3 0 4M11 3c2 2 2 6 0 8M13 1c3 3 3 9 0 12" fill="none" stroke="#fff" /></svg>
      <svg width="24" height="14" viewBox="0 0 24 14"><path d="M.5.500h23v13H.5z" fill="none" stroke="#fff" /><path d="M3 4h18M3 7h18" stroke="#fff" strokeDasharray="2 1" /><path d="M5 10h14" stroke="#fff" /></svg>
      <b>英</b>
      <Svg viewBox="0 0 16 16"><path d="M1 3L13 0l3 12-13 4z" fill="#f25022" /><path d="M12 4C8 3 5 4 5 6s7 1 7 4-5 3-8 1" fill="none" stroke="#fff" strokeWidth="2" /></Svg>
      <Clock>{'13:58\n2017/12/18'}</Clock>
      <svg width="17" height="16" viewBox="0 0 17 16"><path d="M.5.500h16v11H11l-2.500 3L6 11.500H.5z" fill="none" stroke="#fff" /></svg>
      <Edge />
    </Tray>
  </Taskbar>
);

/* ---------- floating desktop widgets ---------- */

const Ball = styled.div`
  position: absolute;
  left: 615px;
  top: -28px;
  width: 46px;
  height: 46px;
  padding-top: 26px;
  border: 2px solid #5fa878;
  border-radius: 50%;
  background: linear-gradient(#3cbf5c, #4fcf6a);
  box-shadow: 0 2px 6px rgba(0, 0, 0, 0.45);
  color: #fff;
  font-weight: 700;
  text-align: center;
`;
const Ime = styled.div`
  position: absolute;
  right: 158px;
  top: 3px;
  display: flex;
  align-items: center;
  gap: 6px;
  width: 190px;
  height: 24px;
  padding: 0 4px 0 15px;
  border: 1px solid #b4cdea;
  background: #fff;
  color: #2272c8;
`;
const ImeLogo = styled.svg`
  position: absolute;
  left: -17px;
  top: -4px;
`;
const ImeMode = styled.b`
  font-size: 16px;
`;

export default function App() {
  return (
    <Frame>
      <GlobalStyle />
      <TitleBar>
        <Icon name="logo" />
        <span>
          广联达BIM钢筋算量软件 <TitleLatin>GGJ2013 - [C:\Users\Administrator.PC-20141127NRHM\Desktop\</TitleLatin>白龙村<TitleLatin>-2016-08-06-13-27-07(2166</TitleLatin>版<TitleLatin>)_16G.GGJ12]</TitleLatin>
        </span>
        <WindowButtons>
          <WinButton type="button" aria-label="最小化"><svg width="11" height="11"><path d="M0 5.500h11" stroke="#000" /></svg></WinButton>
          <WinButton type="button" aria-label="还原"><svg width="11" height="11"><path d="M.5 2.500h8v8h-8zM2.500 2V.5h8v8H9" fill="none" stroke="#000" /></svg></WinButton>
          <WinButton type="button" aria-label="关闭"><svg width="11" height="11"><path d="M.5.500l10 10M10.500.500l-10 10" stroke="#000" /></svg></WinButton>
        </WindowButtons>
      </TitleBar>
      <MenuBar>
        {['文件(F)', '编辑(E)', '楼层(L)', '构件(N)', '绘图(D)', '修改(M)', '钢筋量(Q)', '视图(V)', '工具(T)', '云应用(Y)', 'BIM应用(I)', '在线服务(S)', '帮助(H)', '版本号(B)'].map((m) => (
          <MenuItem key={m} type="button">{m}</MenuItem>
        ))}
        <Tool i="change" t="新建变更" arrow={6} />
        <Tool i="robot" t="广小二" />
        <Ticker href="#">后浇带通过板的位置有..</Ticker>
        <Account>
          <Tool i="account" t="13907298339" arrow={6} />
          <MenuItem type="button">造价豆:0</MenuItem>
          <Tool i="bell" label="消息" />
          <More />
        </Account>
      </MenuBar>
      <ToolRow $h={32}>
        <Band $w={149}>
          <Tools items={[{ i: 'file', label: '新建' }, { i: 'open', label: '打开', arrow: 6 }, { i: 'save', label: '保存' }, '|', { i: 'undo', label: '撤销', arrow: 6 }]} />
          <More />
        </Band>
        <Band $w={548} $pad={1}>
          <Tools items={[{ i: 'define', t: '定义' }, { i: 'sigma', t: '汇总计算' }, { i: 'cloud', t: '云检查' }, { i: 'slabTop', t: '平齐板顶' }, { i: 'find', t: '查找图元' }, { i: 'glasses', t: '查看钢筋量' }, { i: 'batch', t: '批量选择', off: true }]} />
          <More />
        </Band>
        <Band $grow>
          <Tools items={[{ i: 'cube', t: '三维', arrow: 6 }, { i: 'cubeTop', t: '俯视', arrow: 6 }, { i: 'orbit', t: '动态观察', on: true }, { i: 'local3d', t: '局部三维', off: true }, '|', { i: 'fit', t: '全屏' }, { i: 'zoom', t: '缩放', arrow: 5 }, { i: 'pan', t: '平移', arrow: 5 }, { i: 'rotScreen', t: '屏幕旋转', arrow: 2 }, '|', { i: 'floors', t: '选择楼层' }]} />
          <More />
        </Band>
      </ToolRow>
      <Main>
        <Sidebar />
        <Work>
          <Bars>
            <ToolRow>
              <Band>
                <Grip />
                <Tools items={[{ i: 'brush', t: '删除' }, '|', { i: 'copy', t: '复制' }, { i: 'mirror', t: '镜像' }, '|', { i: 'move', t: '移动' }, { i: 'rotate', t: '旋转' }, '|', { i: 'extend', t: '延伸' }, { i: 'trim', t: '修剪' }, '|', { i: 'breakIt', t: '打断' }, { i: 'join', t: '合并' }, { i: 'split', t: '分割', off: true }, '|', { i: 'align', t: '对齐', arrow: 2 }, { i: 'offset', t: '偏移' }, { i: 'stretch', t: '拉伸' }, '|', { i: 'grip', t: '设置夹点', off: true }]} />
              </Band>
            </ToolRow>
            <ToolRow>
              <Band>
                <Grip />
                <Combo label="楼层" value="基础层" w={56} />
                <Combo label="构件类型" value="墙" w={68} />
                <Combo label="构件子类型" value="砌体墙" w={68} />
                <Combo label="构件" value="QTQ-3" w={68} />
                <Sep />
                <Tools items={[{ i: 'props', t: '属性' }, { i: 'editBar', t: '编辑钢筋' }, { i: 'list', t: '构件列表' }, { i: 'picker', t: '拾取构件' }]} />
              </Band>
              <Band $push={72}>
                <Grip />
                <Tools items={[{ i: 'twoPt', t: '两点' }, { i: 'parallel', t: '平行' }, { i: 'ptAngle', t: '点角', arrow: 5 }, { i: 'arcAxis', t: '三点辅轴', arrow: 5 }, { i: 'brush', t: '删除辅轴' }, { i: 'dim', t: '尺寸标注', arrow: 5 }]} />
              </Band>
            </ToolRow>
            <ToolRow>
              <Band>
                <Grip />
                <Tools items={[{ i: 'cursor', t: '选择', arrow: 6 }, '|', { i: 'line', t: '直线' }, { i: 'ptLen', t: '点加长度' }, { i: 'arc', t: '三点画弧', arrow: 5 }]} />
                <Combo label="画弧方式" value="" w={54} />
                <Tools items={[{ i: 'rect', t: '矩形' }, '|', { i: 'smart', t: '智能布置', arrow: 2 }, '|', { i: 'wallEdit', t: '修改墙段属性' }, { i: 'level', t: '查改标高' }, { i: 'wallBase', t: '墙底平齐基础底' }, { i: 'slabBase', t: '平齐底板' }]} />
              </Band>
              <Band $w={30}><Grip /></Band>
            </ToolRow>
          </Bars>
          <Scene />
          <BottomBar>
            <ToolRow>
              <Band>
                <Grip />
                <Tools items={[{ i: 'ortho', t: '正交' }, { i: 'snap', t: '对象捕捉', on: true }, { i: 'dyn', t: '动态输入', on: true }]} />
              </Band>
              <Band>
                <Grip />
                <Tools items={[{ i: 'cross', t: '交点' }, { i: 'perp', t: '垂点', on: true }, { i: 'mid', t: '中点', on: true }, { i: 'vertex', t: '顶点', on: true }, { i: 'coord', t: '坐标' }]} />
              </Band>
              <Band>
                <Grip />
                <Combo label="偏移方式" value="不偏移" w={56} />
                <Sep />
                <Field htmlFor="off-x">X=<Spin id="off-x" value="0" w={58} />mm</Field>
                <Field htmlFor="off-y">&nbsp;&nbsp;Y=<Spin id="off-y" value="0" w={58} />mm</Field>
                <Sep />
                <Field htmlFor="rot-on"><Check type="checkbox" id="rot-on" /><Black>旋转</Black></Field>
                <Field htmlFor="rot"><Spin id="rot" value="0.000" w={68} />°</Field>
              </Band>
            </ToolRow>
          </BottomBar>
        </Work>
      </Main>
      <StatusBar>
        <Cell $w={148}>X=175189 Y=25457</Cell>
        <Cell $w={78}>层高:3.57m</Cell>
        <Cell $w={98}>底标高:-3.6m</Cell>
        <Cell $w={48}>0</Cell>
        <Cell />
        <Cell $w={70}>439.2 FPS</Cell>
      </StatusBar>
      <DesktopBar />
      <Ball>69</Ball>
      <Ime>
        <ImeLogo width="28" height="27" viewBox="0 0 28 27"><path d="M1 5L22 0l5 21-22 6z" fill="#f0562a" /><path d="M22 7C16 3 8 5 8 9s12 3 12 8-8 6-14 2" fill="none" stroke="#fff" strokeWidth="3.500" /></ImeLogo>
        <ImeMode>中</ImeMode>
        <svg width="12" height="12" viewBox="0 0 12 12"><circle cx="3" cy="3" r="1.500" fill="none" stroke="currentColor" /><path d="M9 6v2c0 2-1 2-2 3" stroke="currentColor" strokeWidth="2.500" fill="none" /></svg>
        <FaRegSmile size={16} />
        <FaMicrophone size={15} />
        <FaKeyboard size={17} />
        <svg width="17" height="16" viewBox="0 0 17 16" fill="#b8c6d8"><circle cx="6" cy="3.500" r="3" /><path d="M0 14c0-8 12-8 12-5H7v5zM8 10h9v6H8z" /></svg>
        <FaTshirt size={16} />
        <FaWrench size={14} />
      </Ime>
    </Frame>
  );
}
